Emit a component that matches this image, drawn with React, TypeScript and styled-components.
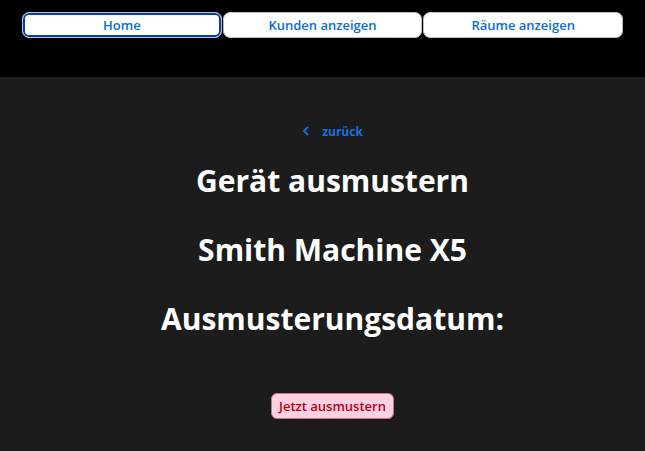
import React from "react";
import styled, { createGlobalStyle } from "styled-components";

const Global = createGlobalStyle`
  html, body { margin: 0; padding: 0; background: #1c1c1c; }
  body { font-family: "Open Sans", "Noto Sans", sans-serif; }
`;

const Page = styled.div`
  min-height: 451px;
  display: flex;
  flex-direction: column;
  background: #1c1c1c;
`;

const Header = styled.header`
  background: #000;
  height: 77px;
  box-sizing: border-box;
  padding: 12px 22px 0 22px;
  display: flex;
  align-items: flex-start;
`;

const NavButton = styled.button<{ $active?: boolean }>`
  flex: 1;
  height: 26px;
  box-sizing: border-box;
  background: #fff;
  border: 1px solid #b8bec6;
  box-shadow: ${(p) => (p.$active ? "inset 0 0 0 2px #0040b0" : "none")};
  border-radius: 7px;
  color: #0a6ed1;
  font-family: "Open Sans", sans-serif;
  font-weight: 600;
  font-size: 13px;
  padding: 0;
  margin-right: 1px;
  &:last-child { margin-right: 0; }
`;

const Main = styled.main`
  display: flex;
  flex-direction: column;
  align-items: center;
  padding-top: 44px;
  padding-left: 20px;
  color: #fff;
`;

const BackLink = styled.a`
  display: flex;
  align-items: center;
  gap: 12px;
  color: #1a6ee0;
  font-weight: 700;
  font-size: 12px;
  text-decoration: none;
  height: 20px;
`;

const Heading = styled.h2`
  margin: 0;
  font-weight: 700;
  font-size: 30px;
  line-height: 38px;
  text-align: center;
`;

const Stack = styled.div`
  display: flex;
  flex-direction: column;
  align-items: center;
  gap: 31px;
  margin-top: 21px;
`;

const DangerButton = styled.button`
  margin-top: 55px;
  height: 26px;
  padding: 0 7px;
  box-sizing: border-box;
  background: #ffd0e0;
  border: 1px solid #c07890;
  border-radius: 6px;
  color: #b00020;
  font-family: "Open Sans", sans-serif;
  font-weight: 600;
  font-size: 13px;
`;

export default function App() {
  return (
    <Page>
      <Global />
      <Header>
        <NavButton $active>Home</NavButton>
        <NavButton>Kunden anzeigen</NavButton>
        <NavButton>Räume anzeigen</NavButton>
      </Header>
      <Main>
        <BackLink href="#">
          <svg width="8" height="10" viewBox="0 0 8 10">
            <path d="M6 1 L2 5 L6 9" stroke="#1a6ee0" strokeWidth="1.8" fill="none" />
          </svg>
          zurück
        </BackLink>
        <Stack>
          <Heading>Gerät ausmustern</Heading>
          <Heading>Smith Machine X5</Heading>
          <Heading>Ausmusterungsdatum:</Heading>
        </Stack>
        <DangerButton>Jetzt ausmustern</DangerButton>
      </Main>
    </Page>
  );
}
